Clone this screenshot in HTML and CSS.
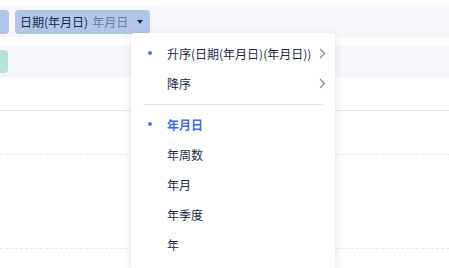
FILE: index.html
```html
<!DOCTYPE html>
<html lang="zh">
<head>
<meta charset="utf-8">
<link rel="stylesheet" href="styles.css">
</head>
<body>
<div class="page">
  <div class="band band-top">
    <div class="pill pill-stub"></div>
    <div class="pill pill-field">
      <span class="field-name">日期(年月日)</span>
      <span class="field-sub">年月日</span>
      <svg class="caret" width="6" height="4" viewBox="0 0 6 4"><path d="M0 0 H6 L3 4 Z" fill="#1d2a47"/></svg>
    </div>
  </div>
  <div class="band band-second">
    <div class="pill pill-teal"></div>
  </div>
  <div class="chart">
    <div class="grid-row row-a"></div>
    <div class="grid-row row-b"></div>
  </div>

  <div class="menu">
    <div class="item">
      <span class="dot"></span>
      <span class="label">升序(日期(年月日)(年月日))</span>
      <svg class="chev" width="7" height="11" viewBox="0 0 7 11"><path d="M1 1 L5.5 5.5 L1 10" fill="none" stroke="#7d869a" stroke-width="1.2"/></svg>
    </div>
    <div class="item">
      <span class="dot hidden"></span>
      <span class="label">降序</span>
      <svg class="chev" width="7" height="11" viewBox="0 0 7 11"><path d="M1 1 L5.5 5.5 L1 10" fill="none" stroke="#7d869a" stroke-width="1.2"/></svg>
    </div>
    <div class="sep"></div>
    <div class="item active">
      <span class="dot"></span>
      <span class="label">年月日</span>
    </div>
    <div class="item">
      <span class="dot hidden"></span>
      <span class="label">年周数</span>
    </div>
    <div class="item">
      <span class="dot hidden"></span>
      <span class="label">年月</span>
    </div>
    <div class="item">
      <span class="dot hidden"></span>
      <span class="label">年季度</span>
    </div>
    <div class="item">
      <span class="dot hidden"></span>
      <span class="label">年</span>
    </div>
  </div>
</div>
</body>
</html>
```

FILE: styles.css
```css
html, body {
  margin: 0;
  padding: 0;
  background: #ffffff;
}
body {
  font-family: "Noto Sans CJK SC", "Noto Sans", sans-serif;
  font-size: 12px;
  color: #1d2a47;
  width: 449px;
  height: 268px;
  overflow: hidden;
}
.page {
  position: relative;
  height: 268px;
  padding-top: 6px;
  box-sizing: border-box;
  overflow: hidden;
}
.band {
  height: 31px;
  background: #f5f7fb;
  display: flex;
  align-items: center;
  gap: 6px;
}
.band-second {
  margin-top: 9px;
}
.pill {
  height: 24px;
  border-radius: 4px;
  box-sizing: border-box;
}
.pill-stub {
  width: 9px;
  background: #b1c5e9;
  border-radius: 0 4px 4px 0;
}
.pill-field {
  width: 135px;
  background: #b1c5e9;
  display: flex;
  align-items: center;
  padding-left: 5px;
  white-space: nowrap;
  line-height: 24px;
}
.field-name {
  color: #1d2a47;
}
.field-sub {
  color: #6f7d9b;
  margin-left: 4px;
}
.caret {
  margin-left: 9px;
}
.pill-teal {
  width: 8px;
  height: 23px;
  background: #b3e4dc;
  border-radius: 0 4px 4px 0;
}
.chart {
  margin-top: 33px;
  border-top: 1px solid #e3e6ef;
}
.grid-row {
  border-bottom: 1px dashed #e5e8ef;
}
.row-a {
  height: 43px;
}
.row-b {
  height: 93px;
}
.menu {
  position: absolute;
  left: 131px;
  top: 33px;
  width: 204px;
  height: 235px;
  background: #ffffff;
  border-radius: 4px 4px 0 0;
  box-shadow: 0 2px 8px rgba(30, 40, 70, 0.14);
  padding-top: 5px;
  box-sizing: border-box;
}
.item {
  height: 30px;
  display: flex;
  align-items: center;
  padding-left: 17px;
  padding-right: 9px;
  white-space: nowrap;
}
.dot {
  width: 4px;
  height: 4px;
  border-radius: 50%;
  background: #4a78e4;
  margin-right: 15px;
  flex: none;
}
.dot.hidden {
  visibility: hidden;
}
.label {
  color: #1d2a47;
}
.item.active .label {
  color: #3d6be0;
  font-weight: bold;
}
.chev {
  margin-left: auto;
}
.sep {
  height: 1px;
  background: #e3e6ee;
  margin: 6px 12px 4px;
}
```
